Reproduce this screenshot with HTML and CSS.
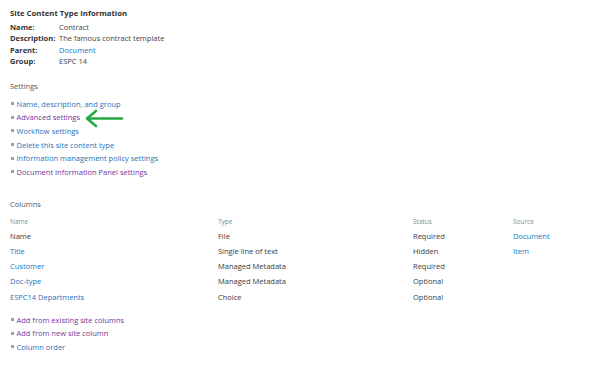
FILE: index.html
```html
<!DOCTYPE html>
<html>
<head>
<meta charset="utf-8">
<link rel="stylesheet" href="styles.css">
</head>
<body>
<div class="page">
  <section class="info">
    <h1 class="info-title">Site Content Type Information</h1>
    <div class="info-grid">
      <span class="label">Name:</span><span class="val">Contract</span>
      <span class="label">Description:</span><span class="val">The famous contract template</span>
      <span class="label">Parent:</span><span class="val"><a class="link" href="#">Document</a></span>
      <span class="label">Group:</span><span class="val">ESPC 14</span>
    </div>
  </section>

  <h2 class="section-title settings-title">Settings</h2>
  <ul class="bullets settings-list">
    <li><a class="link" href="#">Name, description, and group</a></li>
    <li class="has-arrow"><a class="link visited" href="#">Advanced settings</a>
      <svg class="arrow" width="40" height="20" viewBox="0 0 40 20"><path d="M38 9.5 H3 M12 2 L3 9.5 L12 17" fill="none" stroke="#26a844" stroke-width="2.6" stroke-linecap="round" stroke-linejoin="round"/></svg>
    </li>
    <li><a class="link" href="#">Workflow settings</a></li>
    <li><a class="link" href="#">Delete this site content type</a></li>
    <li><a class="link" href="#">Information management policy settings</a></li>
    <li><a class="link visited" href="#">Document Information Panel settings</a></li>
  </ul>

  <h2 class="section-title columns-title">Columns</h2>
  <div class="table">
    <span class="th">Name</span><span class="th">Type</span><span class="th">Status</span><span class="th">Source</span>
    <span class="td">Name</span><span class="td">File</span><span class="td">Required</span><span class="td"><a class="link" href="#">Document</a></span>
    <span class="td"><a class="link" href="#">Title</a></span><span class="td">Single line of text</span><span class="td">Hidden</span><span class="td"><a class="link" href="#">Item</a></span>
    <span class="td"><a class="link" href="#">Customer</a></span><span class="td">Managed Metadata</span><span class="td">Required</span><span class="td"></span>
    <span class="td"><a class="link" href="#">Doc-type</a></span><span class="td">Managed Metadata</span><span class="td">Optional</span><span class="td"></span>
    <span class="td"><a class="link" href="#">ESPC14 Departments</a></span><span class="td">Choice</span><span class="td">Optional</span><span class="td"></span>
  </div>

  <ul class="bullets bottom-list">
    <li><a class="link visited" href="#">Add from existing site columns</a></li>
    <li><a class="link visited" href="#">Add from new site column</a></li>
    <li><a class="link" href="#">Column order</a></li>
  </ul>
</div>
</body>
</html>
```

FILE: styles.css
```css
html, body {
  margin: 0;
  padding: 0;
  background: #fff;
}
body {
  font-family: "Open Sans", "Noto Sans", sans-serif;
  font-size: 7.5px;
  color: #444;
}
.page {
  padding: 7px 0 0 10px;
}
.info-title {
  margin: 0;
  font-size: 7.75px;
  font-weight: 700;
  color: #333;
  line-height: 12px;
}
.info-grid {
  display: grid;
  grid-template-columns: 49px auto;
  grid-auto-rows: 11.5px;
  line-height: 11.5px;
  margin-top: 2.5px;
  font-size: 7.5px;
}
.label {
  font-weight: 700;
  color: #333;
}
.val {
  color: #444;
}
.link {
  color: #1e73be;
  text-decoration: none;
}
.link.visited {
  color: #7135a0;
}
.section-title {
  margin: 0;
  font-size: 7.5px;
  font-weight: 400;
  color: #555;
  line-height: 12px;
}
.settings-title {
  margin-top: 12.5px;
}
.bullets {
  list-style: none;
  margin: 0;
  padding: 0;
}
.bullets li {
  display: flex;
  align-items: center;
  height: 13.6px;
  position: relative;
}
.bullets li::before {
  content: "";
  width: 3px;
  height: 3px;
  background: #a0a0a0;
  margin: 0 2.5px 0 1px;
  flex: none;
}
.settings-list {
  margin-top: 5px;
}
.arrow {
  position: absolute;
  left: 74px;
  top: -2px;
}
.columns-title {
  margin-top: 19.5px;
}
.table {
  display: grid;
  grid-template-columns: 208px 195px 100px auto;
  margin-top: 6px;
}
.th {
  font-size: 6.5px;
  color: #888;
  line-height: 12px;
}
.td {
  font-size: 7.5px;
  color: #3a3a3a;
  line-height: 15.3px;
}
.table .th:nth-child(-n+4) {
  margin-bottom: 0.5px;
}
.bottom-list {
  margin-top: 8px;
}
.bottom-list li {
  height: 13.4px;
}
```
